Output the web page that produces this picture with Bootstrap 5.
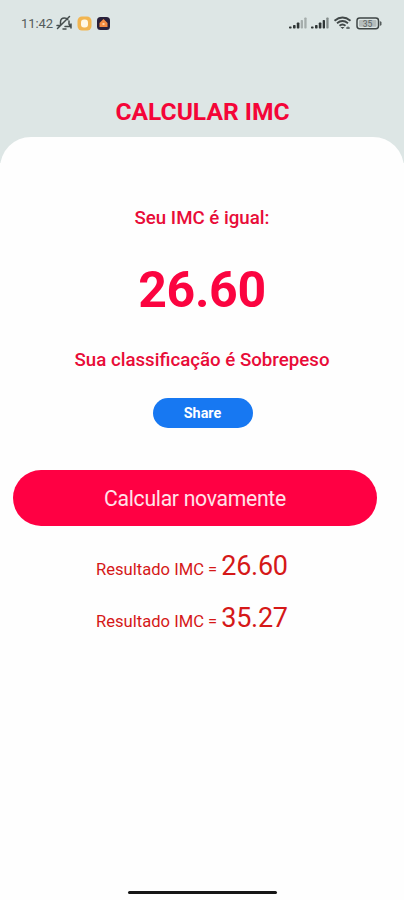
<!DOCTYPE html>
<html lang="pt-BR">
<head>
<meta charset="utf-8">
<meta name="viewport" content="width=device-width, initial-scale=1">
<title>Calcular IMC</title>
<link href="https://cdn.jsdelivr.net/npm/bootstrap@5.3.0/dist/css/bootstrap.min.css" rel="stylesheet">
<style>
body { font-family: Roboto, "Liberation Sans", sans-serif; background: #fefefe; }
.screen { height: 900px; background: linear-gradient(#dde6e5 163px, #fefefe 163px); }
.status-bar { height: 46px; padding: 0 22px 0 21px; color: #555c5c; }
.clock { font-size: 13px; letter-spacing: -.1px; line-height: 16px; padding-top: 1px; }
.page-title { color: #f40538; font-size: 24.6px; font-weight: 700; line-height: 30px; height: 91px; padding-top: 51px; padding-left: 1px; }
.sheet { background: #fefefe; border-radius: 31px 31px 0 0; padding-top: 69px; }
.caption-text { color: #e80c38; font-size: 18.7px; font-weight: 500; line-height: 24px; }
.imc-value { color: #fb0440; font-size: 50px; font-weight: 700; letter-spacing: -.3px; line-height: 60px; margin: 30px 0 28px; }
.btn-share { width: 100px; height: 30px; margin: 26px 0 0 1px; background: #1778f2; color: #fff; font-size: 14.4px; line-height: 32px; font-weight: 700; }
.btn-again { width: 364px; height: 56px; margin: 42px 0 0 13px; background: #ff0043; color: #ffe3e9; font-size: 21.2px; letter-spacing: -.3px; line-height: 58px; }
.results { color: #d51818; font-size: 16.6px; padding: 18px 0 0 96px; }
.result-row { height: 52px; line-height: 52px; }
.result-value { font-size: 27px; letter-spacing: -.3px; line-height: 1; }
.home-bar { width: 149px; height: 3px; background: #161616; margin-bottom: 6px; }
</style>
</head>
<body>
<main class="screen d-flex flex-column overflow-hidden">
  <header>
    <div class="status-bar d-flex align-items-center justify-content-between">
      <div class="d-flex align-items-center">
        <span class="clock">11:42</span>
        <svg style="margin-left:3px" width="17" height="16" viewBox="0 0 17 16" fill="none" stroke="#444c4c" stroke-width="1.500" stroke-linecap="round"><path d="M4.500 9V7c0-2.500 1.700-4 4-4 1.500 0 2.600.600 3.300 1.600M1 10.500h3M13 6v3l1.500 2.500H9M7 14h3M1.500 13.500 13.500 1.500M15 9v4"/></svg>
        <svg class="ms-1" width="15" height="15" viewBox="0 0 15 15"><rect x=".5" y=".5" width="14" height="14" rx="4.500" fill="#f2b550"/><rect x="4" y="3.500" width="7" height="8" rx="3" fill="#fff8e5"/></svg>
        <svg class="ms-1" width="15" height="15" viewBox="0 0 15 15"><rect x="1" y="1" width="13" height="13" rx="3.500" fill="#29203b"/><path d="M7.500 3 11.500 7v4h-8V7z" fill="#f58a42"/><path d="M6.500 7h2v2h-2z" fill="#ffd0a0"/></svg>
      </div>
      <div class="d-flex align-items-center">
        <svg width="18" height="14" viewBox="0 0 18 14"><g fill="#303636"><rect y="10.500" width="2.600" height="2" rx=".7"/><rect x="4" y="9" width="2.600" height="3.500" rx=".7"/><rect x="7.800" y="6.500" width="2.600" height="6" rx=".7"/></g><g fill="#a5adac"><rect x="11.700" y="4" width="2.300" height="8.500" rx=".7"/><rect x="15.300" y="1.500" width="2.300" height="11" rx=".7"/></g></svg>
        <svg style="margin-left:4px" width="18" height="14" viewBox="0 0 18 14"><g fill="#303636"><rect y="10.500" width="2.600" height="2" rx=".7"/><rect x="4" y="9" width="2.600" height="3.500" rx=".7"/><rect x="7.800" y="6.500" width="2.600" height="6" rx=".7"/><rect x="11.700" y="4" width="2.300" height="8.500" rx=".7"/></g><rect x="15.300" y="1.500" width="2.300" height="11" rx=".7" fill="#838b8a"/></svg>
        <svg class="ms-1" width="19" height="14" viewBox="0 0 19 14" fill="none" stroke="#414848" stroke-width="1.900"><path d="M1.500 4.800Q9.500-1.700 17.500 4.800M4 7.300q5.500-4.400 11 0M6.500 9.800q3-2.500 6 0"/><path d="M7.500 11h4l-2 2z" fill="#414848" stroke="none"/><path d="M13 12h4m-2-1.500V13" stroke-width="1"/></svg>
        <svg class="ms-1" width="26" height="13" viewBox="0 0 26 13"><rect x="1" y="1" width="21.500" height="10.800" rx="2.700" fill="none" stroke="#3e4545" stroke-width="1.500"/><rect x="3" y="3" width="17.500" height="6.800" rx="1" fill="#b5bdbc"/><path d="M23.800 4v5l1.700-1V5z" fill="#555c5c"/><text x="11.500" y="9.600" text-anchor="middle" font-size="8.500" fill="#5b6363">35</text></svg>
      </div>
    </div>
    <h1 class="page-title text-center mb-0">CALCULAR IMC</h1>
  </header>
  <section class="sheet flex-grow-1 d-flex flex-column">
    <div class="text-center">
      <p class="caption-text mb-0">Seu IMC é igual:</p>
      <p class="imc-value">26.60</p>
      <p class="caption-text mb-0">Sua classificação é Sobrepeso</p>
      <button type="button" class="btn btn-share rounded-pill border-0 p-0">Share</button>
    </div>
    <button type="button" class="btn btn-again rounded-pill border-0 p-0">Calcular novamente</button>
    <div class="results">
      <div class="result-row">Resultado IMC = <span class="result-value">26.60</span></div>
      <div class="result-row">Resultado IMC = <span class="result-value">35.27</span></div>
    </div>
    <div class="home-bar rounded-pill mt-auto mx-auto"></div>
  </section>
</main>
<script src="https://cdn.jsdelivr.net/npm/bootstrap@5.3.0/dist/js/bootstrap.bundle.min.js"></script>
</body>
</html>
